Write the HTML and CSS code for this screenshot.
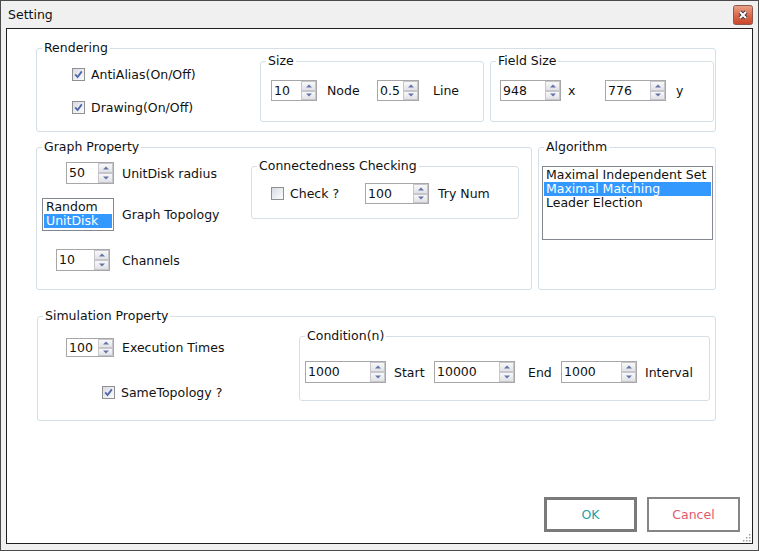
FILE: index.html
```html
<!DOCTYPE html>
<html>
<head>
<meta charset="utf-8">
<title>Setting</title>
<link rel="stylesheet" href="styles.css">
</head>
<body>
<div class="window">
  <div class="titlebar">
    <span class="title">Setting</span>
    <button class="close" aria-label="Close">
      <svg viewBox="0 0 20 20" width="20" height="20">
        <defs>
          <linearGradient id="cg" x1="0" y1="0" x2="0" y2="1">
            <stop offset="0" stop-color="#eaa58d"/>
            <stop offset="0.5" stop-color="#dc6a4c"/>
            <stop offset="1" stop-color="#c9452b"/>
          </linearGradient>
        </defs>
        <rect x="0.5" y="0.5" width="19" height="19" rx="2" fill="url(#cg)" stroke="#8a5a50"/>
        <path d="M7 7L13 13M13 7L7 13" stroke="#3c3c3c" stroke-width="4"/>
        <path d="M7 7L13 13M13 7L7 13" stroke="#fff" stroke-width="2"/>
      </svg>
    </button>
  </div>

  <div class="client">
    <!-- Rendering -->
    <div class="group g-render">
      <span class="gtitle">Rendering</span>
      <div class="checks">
        <label class="check"><span class="cb"><svg viewBox="0 0 13 13" width="13" height="13"><path d="M3.2 6.4L5.6 9L9.8 3.4" stroke="#4f67a6" stroke-width="1.8" fill="none"/></svg></span>AntiAlias(On/Off)</label>
        <label class="check"><span class="cb"><svg viewBox="0 0 13 13" width="13" height="13"><path d="M3.2 6.4L5.6 9L9.8 3.4" stroke="#4f67a6" stroke-width="1.8" fill="none"/></svg></span>Drawing(On/Off)</label>
      </div>
      <div class="group g-size">
        <span class="gtitle">Size</span>
        <div class="line">
          <div class="spin sp-node"><span class="val">10</span><span class="btns"><i class="up"></i><i class="dn"></i></span></div>
          <span class="lb lb-node">Node</span>
          <div class="spin sp-line"><span class="val">0.5</span><span class="btns"><i class="up"></i><i class="dn"></i></span></div>
          <span class="lb lb-line">Line</span>
        </div>
      </div>
      <div class="group g-field">
        <span class="gtitle">Field Size</span>
        <div class="line">
          <div class="spin sp-field"><span class="val">948</span><span class="btns"><i class="up"></i><i class="dn"></i></span></div>
          <span class="lb lb-x">x</span>
          <div class="spin sp-field"><span class="val">776</span><span class="btns"><i class="up"></i><i class="dn"></i></span></div>
          <span class="lb lb-y">y</span>
        </div>
      </div>
    </div>

    <!-- Graph + Algorithm -->
    <div class="row2">
      <div class="group g-graph">
        <span class="gtitle">Graph Property</span>
        <div class="gp-left">
          <div class="line gp-a">
            <div class="spin sp-radius"><span class="val">50</span><span class="btns"><i class="up"></i><i class="dn"></i></span></div>
            <span class="lb lb-8">UnitDisk radius</span>
          </div>
          <div class="line gp-b">
            <div class="listbox lb-topo">
              <div>Random</div>
              <div class="sel">UnitDisk</div>
            </div>
            <span class="lb lb-8">Graph Topology</span>
          </div>
          <div class="line gp-c">
            <div class="spin sp-chan"><span class="val">10</span><span class="btns"><i class="up"></i><i class="dn"></i></span></div>
            <span class="lb lb-12">Channels</span>
          </div>
        </div>
        <div class="group g-conn">
          <span class="gtitle">Connectedness Checking</span>
          <div class="line">
            <label class="check ck-conn"><span class="cb"></span>Check ?</label>
            <div class="spin sp-try"><span class="val">100</span><span class="btns"><i class="up"></i><i class="dn"></i></span></div>
            <span class="lb lb-9">Try Num</span>
          </div>
        </div>
      </div>
      <div class="group g-algo">
        <span class="gtitle">Algorithm</span>
        <div class="listbox lb-algo">
          <div>Maximal Independent Set</div>
          <div class="sel">Maximal Matching</div>
          <div>Leader Election</div>
        </div>
      </div>
    </div>

    <!-- Simulation -->
    <div class="group g-sim">
      <span class="gtitle">Simulation Property</span>
      <div class="sim-left">
        <div class="line sim-a">
          <div class="spin sp-exec"><span class="val">100</span><span class="btns"><i class="up"></i><i class="dn"></i></span></div>
          <span class="lb lb-8">Execution Times</span>
        </div>
        <label class="check sim-b"><span class="cb"><svg viewBox="0 0 13 13" width="13" height="13"><path d="M3.2 6.4L5.6 9L9.8 3.4" stroke="#4f67a6" stroke-width="1.8" fill="none"/></svg></span>SameTopology ?</label>
      </div>
      <div class="group g-cond">
        <span class="gtitle">Condition(n)</span>
        <div class="line">
          <div class="spin sp-big"><span class="val">1000</span><span class="btns"><i class="up"></i><i class="dn"></i></span></div>
          <span class="lb lb-start">Start</span>
          <div class="spin sp-big"><span class="val">10000</span><span class="btns"><i class="up"></i><i class="dn"></i></span></div>
          <span class="lb lb-end">End</span>
          <div class="spin sp-int"><span class="val">1000</span><span class="btns"><i class="up"></i><i class="dn"></i></span></div>
          <span class="lb lb-8">Interval</span>
        </div>
      </div>
    </div>

    <div class="buttons">
      <button class="btn ok">OK</button>
      <button class="btn cancel">Cancel</button>
    </div>

    <svg class="grip" viewBox="0 0 10 10" width="10" height="10">
      <rect x="8" y="2" width="1.5" height="1.5" fill="#a0a0a0"/>
      <rect x="5" y="5" width="1.5" height="1.5" fill="#a0a0a0"/>
      <rect x="8" y="5" width="1.5" height="1.5" fill="#a0a0a0"/>
      <rect x="2" y="8" width="1.5" height="1.5" fill="#a0a0a0"/>
      <rect x="5" y="8" width="1.5" height="1.5" fill="#a0a0a0"/>
      <rect x="8" y="8" width="1.5" height="1.5" fill="#a0a0a0"/>
    </svg>
  </div>
</div>
</body>
</html>
```

FILE: styles.css
```css
* { box-sizing: border-box; }
html, body { margin: 0; padding: 0; }
body {
  width: 759px;
  height: 551px;
  overflow: hidden;
  font-family: "DejaVu Sans", Verdana, sans-serif;
  font-size: 12.5px;
  color: #111;
}

.window {
  width: 759px;
  height: 551px;
  border: 1px solid #4a4a4a;
  background: #f0f0f0;
  display: flex;
  flex-direction: column;
}

.titlebar {
  height: 27px;
  flex: none;
  display: flex;
  align-items: flex-start;
  padding: 0 5px 0 7px;
}
.title { flex: 1; line-height: 27px; }
.close {
  width: 20px;
  height: 20px;
  margin-top: 4px;
  padding: 0;
  border: 0;
  background: none;
  display: block;
}
.close svg { display: block; }

.client {
  position: relative;
  flex: 1;
  margin: 0 5px 6px 5px;
  border: 1px solid #202020;
  background: #fff;
  padding: 19px 0 0 29px;
  display: flex;
  flex-direction: column;
  align-items: flex-start;
}

.group {
  position: relative;
  border: 1px solid #d5dfe6;
  border-radius: 3px;
  flex: none;
}
.gtitle {
  position: absolute;
  top: -8px;
  left: 5px;
  padding: 0 2px;
  background: #fff;
  line-height: 14px;
  white-space: nowrap;
}

.line { display: flex; align-items: center; white-space: nowrap; }
.lb { white-space: nowrap; flex: none; }

/* checkbox */
.check { display: flex; align-items: center; gap: 6px; height: 13px; white-space: nowrap; }
.cb {
  width: 13px;
  height: 13px;
  flex: none;
  border: 1px solid #8f9090;
  background: linear-gradient(135deg, #d6d9e0 0%, #eef0f4 60%, #fbfbfc 100%);
  position: relative;
}
.cb svg { position: absolute; left: -1px; top: -1px; display: block; }

/* spin box */
.spin {
  display: flex;
  height: 21px;
  flex: none;
  border: 1px solid #a7a7a7;
  background: #fff;
}
.spin .val { flex: 1; padding-left: 2px; line-height: 19px; }
.spin .btns { width: 15px; display: flex; flex-direction: column; }
.spin .btns i {
  flex: 1;
  border: 1px solid #c6c6cc;
  background: linear-gradient(#f8f8f9, #e1e2e6);
  position: relative;
}
.spin .btns i::after {
  content: "";
  position: absolute;
  left: 50%;
  top: 50%;
  transform: translate(-50%, -50%);
  border-left: 3px solid transparent;
  border-right: 3px solid transparent;
}
.spin .up::after { border-bottom: 3px solid #6274a8; }
.spin .dn::after { border-top: 3px solid #6274a8; }

/* list box */
.listbox {
  border: 1px solid #828790;
  background: #fff;
  padding: 1px;
  line-height: 14px;
  flex: none;
}
.listbox div { padding-left: 2px; white-space: nowrap; }
.listbox .sel { background: #3399ff; color: #fff; }

/* Rendering */
.g-render { width: 680px; height: 84px; display: flex; align-items: flex-start; }
.checks {
  width: 188px;
  margin: 19px 0 0 35px;
  display: flex;
  flex-direction: column;
  gap: 20px;
  flex: none;
}
.g-size, .g-field { width: 224px; height: 61px; margin-top: 12px; }
.g-size { padding: 18px 0 0 10px; }
.g-field { padding: 18px 0 0 9px; margin-left: 6px; }
.sp-node { width: 46px; }
.sp-line { width: 42px; }
.sp-field { width: 61px; }
.lb-node { margin-left: 10px; width: 50px; }
.lb-line { margin-left: 14px; }
.lb-x { margin-left: 7px; width: 37px; }
.lb-y { margin-left: 10px; }

/* Graph + Algorithm */
.row2 { display: flex; gap: 6px; margin-top: 15px; }
.g-graph { width: 496px; height: 143px; display: flex; align-items: flex-start; }
.gp-left {
  width: 214px;
  flex: none;
  display: flex;
  flex-direction: column;
  align-items: flex-start;
  padding-top: 14px;
}
.gp-a { margin-left: 29px; }
.gp-b { margin: 14px 0 0 5px; }
.gp-c { margin: 18px 0 0 19px; }
.sp-radius { width: 48px; height: 22px; }
.sp-chan { width: 54px; height: 22px; }
.lb-topo { width: 72px; height: 33px; }
.lb-8 { margin-left: 8px; }
.lb-9 { margin-left: 9px; }
.lb-12 { margin-left: 12px; }

.g-conn { width: 268px; height: 53px; margin-top: 18px; padding: 16px 0 0 19px; }
.ck-conn { width: 94px; flex: none; }
.sp-try { width: 64px; }

.g-algo { width: 178px; height: 143px; }
.lb-algo { width: 171px; height: 74px; margin: 18px 0 0 3px; }

/* Simulation */
.g-sim {
  width: 679px;
  height: 105px;
  margin: 26px 0 0 1px;
  display: flex;
  align-items: flex-start;
}
.sim-left {
  width: 261px;
  flex: none;
  display: flex;
  flex-direction: column;
  align-items: flex-start;
}
.sim-a { margin: 21px 0 0 28px; }
.sp-exec { width: 48px; height: 19px; }
.sp-exec .val { line-height: 17px; }
.sim-b { margin: 29px 0 0 64px; }

.g-cond { width: 411px; height: 65px; margin-top: 19px; padding: 24px 0 0 5px; }
.g-cond .spin { height: 22px; }
.sp-big { width: 81px; }
.sp-int { width: 76px; }
.lb-start { margin-left: 8px; width: 40px; }
.lb-end { margin-left: 13px; width: 33px; }

/* Buttons */
.buttons {
  display: flex;
  gap: 10px;
  margin: 76px 12px 0 0;
  align-self: flex-end;
}
.btn {
  width: 93px;
  height: 35px;
  background: #fff;
  font: inherit;
  padding: 0;
  display: flex;
  align-items: center;
  justify-content: center;
}
.ok { border: 3px solid #7a7a7a; color: #1f9fa8; }
.cancel { border: 2px solid #858585; color: #e45a6b; }

.grip { position: absolute; right: 1px; bottom: 1px; display: block; }
```
